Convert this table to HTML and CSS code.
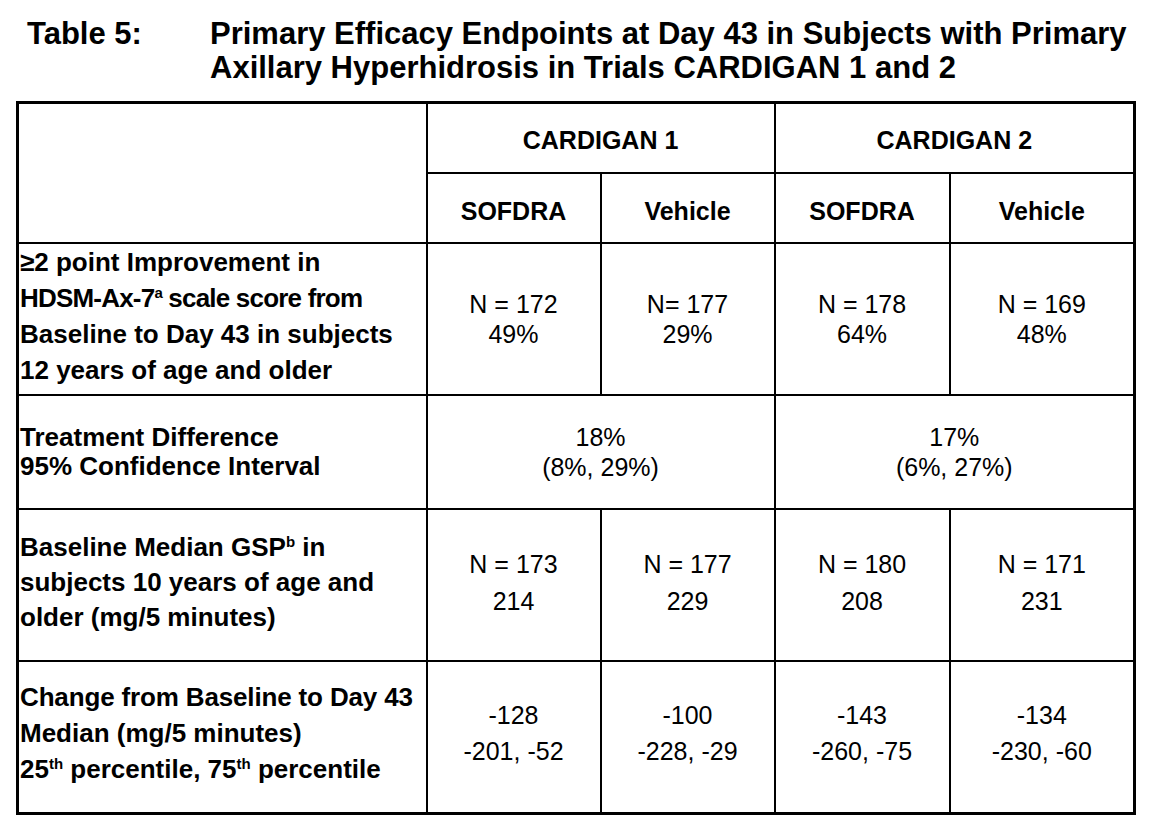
FILE: index.html
```html
<!DOCTYPE html>
<html lang="en">
<head>
<meta charset="utf-8">
<title>Table 5</title>
<link rel="stylesheet" href="styles.css">
</head>
<body>
<div class="page">
  <div class="caption">
    <div class="caption-label">Table 5:</div>
    <div class="caption-text">Primary Efficacy Endpoints at Day 43 in Subjects with Primary<br>Axillary Hyperhidrosis in Trials CARDIGAN 1 and 2</div>
  </div>
  <table class="efficacy">
    <colgroup>
      <col class="c0"><col class="c1"><col class="c2"><col class="c3"><col class="c4">
    </colgroup>
    <tr class="h1">
      <td rowspan="2"></td>
      <th colspan="2">CARDIGAN 1</th>
      <th colspan="2">CARDIGAN 2</th>
    </tr>
    <tr class="h2">
      <th>SOFDRA</th>
      <th>Vehicle</th>
      <th>SOFDRA</th>
      <th>Vehicle</th>
    </tr>
    <tr class="r1">
      <td class="label lh36 up6">≥2 point Improvement in<br><span class="tight">HDSM-Ax-7<sup>a</sup> scale score from</span><br>Baseline to Day 43 in subjects<br>12 years of age and older</td>
      <td class="val lh30">N = 172<br>49%</td>
      <td class="val lh30">N= 177<br>29%</td>
      <td class="val lh30">N = 178<br>64%</td>
      <td class="val lh30">N = 169<br>48%</td>
    </tr>
    <tr class="r2">
      <td class="label lh29">Treatment Difference<br>95% Confidence Interval</td>
      <td class="val lh30" colspan="2">18%<br>(8%, 29%)</td>
      <td class="val lh30" colspan="2">17%<br>(6%, 27%)</td>
    </tr>
    <tr class="r3">
      <td class="label lh35 up4">Baseline Median GSP<sup>b</sup> in<br>subjects 10 years of age and<br>older (mg/5 minutes)</td>
      <td class="val lh37 up4">N = 173<br>214</td>
      <td class="val lh37 up4">N = 177<br>229</td>
      <td class="val lh37 up4">N = 180<br>208</td>
      <td class="val lh37 up4">N = 171<br>231</td>
    </tr>
    <tr class="r4">
      <td class="label lh36 up8"><span class="snug">Change from Baseline to Day 43</span><br>Median (mg/5 minutes)<br>25<sup>th</sup> percentile, 75<sup>th</sup> percentile</td>
      <td class="val lh36 up8">-128<br>-201, -52</td>
      <td class="val lh36 up8">-100<br>-228, -29</td>
      <td class="val lh36 up8">-143<br>-260, -75</td>
      <td class="val lh36 up8">-134<br>-230, -60</td>
    </tr>
  </table>
</div>
</body>
</html>
```

FILE: styles.css
```css
html, body {
  margin: 0;
  padding: 0;
  background: #ffffff;
}

body {
  font-family: "Liberation Sans", Arial, sans-serif;
  color: #000000;
}

.page {
  padding: 17px 0 0 16px;
}

.caption {
  display: flex;
  font-weight: bold;
  font-size: 31px;
  line-height: 34px;
  letter-spacing: 0;
  padding-left: 11px;
  margin-bottom: 16px;
}

.caption-label {
  width: 183px;
  flex: none;
}

.efficacy {
  border-collapse: collapse;
  table-layout: fixed;
  width: 1117px;
  font-size: 25px;
  border: 3px solid #000000;
}

.c0 { width: 409px; }
.c1 { width: 174px; }
.c2 { width: 174px; }
.c3 { width: 175px; }
.c4 { width: 185px; }

.efficacy td,
.efficacy th {
  border: 2px solid #000000;
  padding: 0 2px;
  vertical-align: middle;
}

.efficacy th {
  font-weight: bold;
  text-align: center;
  line-height: 30px;
}

.h1 { height: 70px; }
.h1 th { padding-top: 4px; }
.h2 { height: 70px; }
.h2 th { padding-top: 6px; }
.r1 { height: 151px; }
.r2 { height: 114px; }
.r3 { height: 152px; }
.r4 { height: 153px; }

.efficacy .label {
  font-weight: bold;
  font-size: 26px;
  text-align: left;
  white-space: nowrap;
  padding-left: 1px;
}

.val {
  text-align: center;
}

.efficacy .up4 { padding-bottom: 4px; }
.efficacy .up6 { padding-bottom: 6px; }
.efficacy .up8 { padding-bottom: 8px; }

.tight { letter-spacing: -0.8px; }
.snug { letter-spacing: -0.15px; }

.lh29 { line-height: 29px; }
.lh30 { line-height: 30px; }
.lh35 { line-height: 35px; }
.lh36 { line-height: 36px; }
.lh37 { line-height: 37px; }

sup {
  font-size: 15px;
  line-height: 0;
  vertical-align: 9px;
}
```
